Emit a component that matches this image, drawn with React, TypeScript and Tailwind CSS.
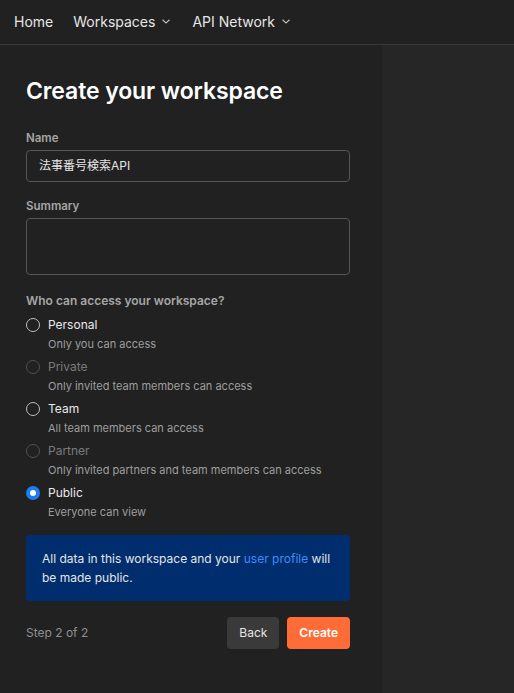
import React, { useState } from 'react';

const font = { fontFamily: 'Inter, "Noto Sans CJK JP", sans-serif' };

function Chevron() {
    return (
        <svg width="8" height="5" viewBox="0 0 8 5" fill="none" className="ml-[7px] mt-[1px]">
            <path d="M0.5 0.75 L4 4 L7.5 0.75" stroke="#bdbdbd" strokeWidth="1.1" />
        </svg>
    );
}

const options = [
    { id: 'personal', label: 'Personal', desc: 'Only you can access', disabled: false },
    { id: 'private', label: 'Private', desc: 'Only invited team members can access', disabled: true },
    { id: 'team', label: 'Team', desc: 'All team members can access', disabled: false },
    { id: 'partner', label: 'Partner', desc: 'Only invited partners and team members can access', disabled: true },
    { id: 'public', label: 'Public', desc: 'Everyone can view', disabled: false },
];

export default function App() {
    const [access, setAccess] = useState('public');

    return (
        <div className="w-[514px] h-[693px] bg-[#212121] flex flex-col overflow-hidden" style={font}>
            <nav className="h-[45px] shrink-0 flex items-center pb-[2px] px-[14px] gap-[20px] border-b border-[#383838] text-[14px] text-[#e6e6e6]">
                <span>Home</span>
                <span className="flex items-center">Workspaces <Chevron /></span>
                <span className="flex items-center ml-[2px]">API Network <Chevron /></span>
            </nav>

            <div className="flex flex-1 min-h-0">
                <div className="w-[382px] shrink-0 bg-[#212121] pl-[26px] pr-[32px] pt-[30px]">
                    <h1 className="text-[23px] leading-[32px] font-semibold text-white tracking-[-0.1px]">
                        Create your workspace
                    </h1>

                    <label className="block mt-[23px] text-[11.5px] leading-[16px] font-semibold text-[#a6a6a6]">Name</label>
                    <div className="mt-[4px] h-[32px] rounded-[4px] border border-[#565656] flex items-center px-[12px] text-[12px] text-[#e6e6e6]">
                        法事番号検索API
                    </div>

                    <label className="block mt-[16px] text-[11.5px] leading-[16px] font-semibold text-[#a6a6a6]">Summary</label>
                    <div className="mt-[4px] h-[57px] rounded-[4px] border border-[#565656]" />

                    <div className="mt-[16px] text-[12px] leading-[20px] font-semibold text-[#a6a6a6]">
                        Who can access your workspace?
                    </div>

                    <div className="mt-[4px] flex flex-col gap-[5px]">
                        {options.map((o) => {
                            const selected = access === o.id;
                            return (
                                <div
                                    key={o.id}
                                    className="flex gap-[8px] cursor-pointer"
                                    onClick={() => !o.disabled && setAccess(o.id)}
                                >
                                    <div className="h-[20px] flex items-center">
                                        {selected ? (
                                            <div className="w-[14px] h-[14px] rounded-full bg-[#1c7cf0] flex items-center justify-center">
                                                <div className="w-[6px] h-[6px] rounded-full bg-white" />
                                            </div>
                                        ) : (
                                            <div
                                                className={
                                                    o.disabled
                                                        ? 'w-[14px] h-[14px] rounded-full border border-[#505050]'
                                                        : 'w-[14px] h-[14px] rounded-full border border-[#bdbdbd]'
                                                }
                                            />
                                        )}
                                    </div>
                                    <div>
                                        <div
                                            className={
                                                o.disabled
                                                    ? 'text-[12px] leading-[20px] text-[#7a7a7a]'
                                                    : 'text-[12px] leading-[20px] text-[#eaeaea]'
                                            }
                                        >
                                            {o.label}
                                        </div>
                                        <div className="mt-[1px] text-[11px] leading-[16px] text-[#9e9e9e]">{o.desc}</div>
                                    </div>
                                </div>
                            );
                        })}
                    </div>

                    <div className="mt-[15px] rounded-[4px] bg-[#002d6e] px-[16px] pt-[14px] pb-[14px] text-[12px] leading-[19px] text-[#e6e6e6]">
                        All data in this workspace and your <span className="text-[#3e8cf5]">user profile</span> will be
                        made public.
                    </div>

                    <div className="mt-[16px] flex items-center">
                        <span className="text-[12px] text-[#8f8f8f]">Step 2 of 2</span>
                        <div className="ml-auto flex gap-[8px]">
                            <button className="h-[32px] px-[12px] rounded-[4px] bg-[#3a3a3a] text-[12px] text-[#e6e6e6]">
                                Back
                            </button>
                            <button className="h-[32px] px-[12px] rounded-[4px] bg-[#ff6c37] text-[12px] font-semibold text-white">
                                Create
                            </button>
                        </div>
                    </div>
                </div>
                <div className="flex-1 bg-[#262626]" />
            </div>
        </div>
    );
}
